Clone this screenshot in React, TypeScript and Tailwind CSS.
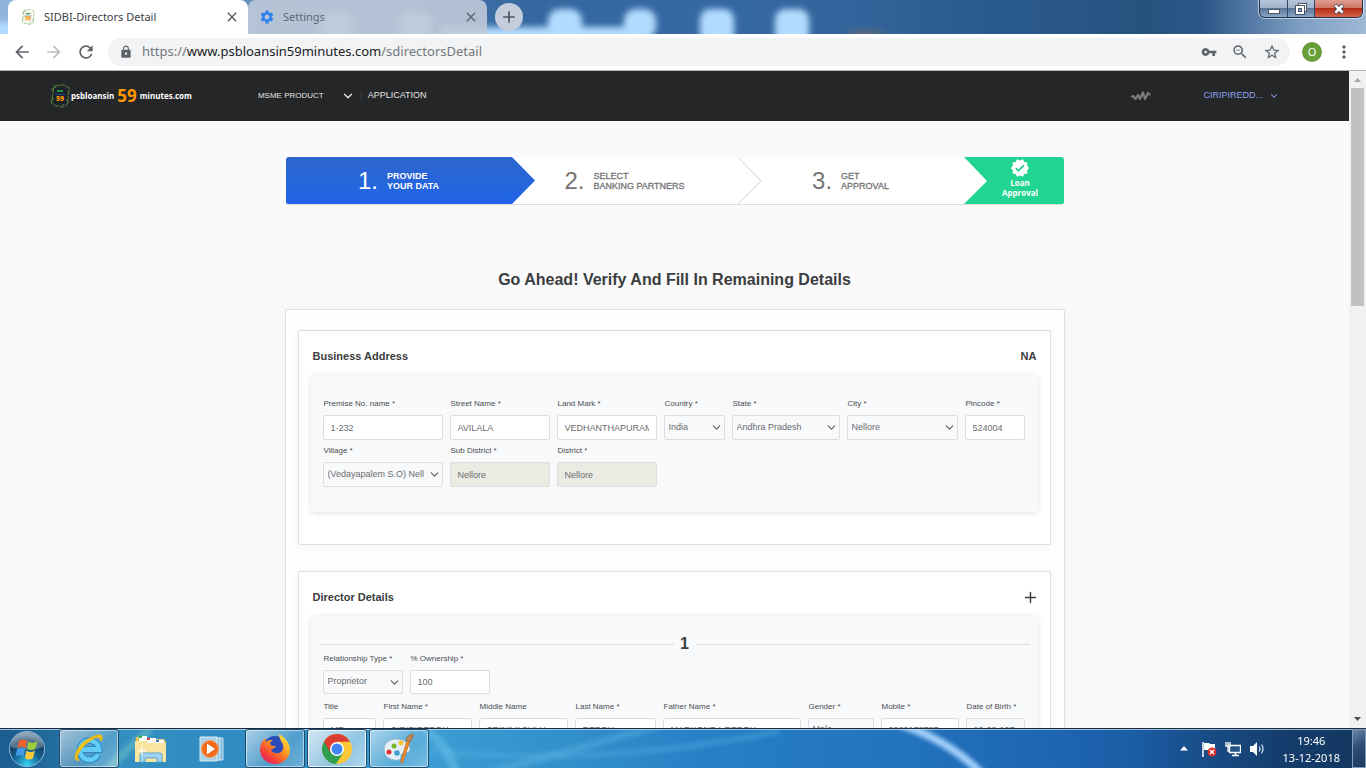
import React, { useId } from "react";
import { ChevronDown, Plus } from "lucide-react";
import {
  MdAdd,
  MdArrowBack,
  MdArrowForward,
  MdClose,
  MdLock,
  MdMoreVert,
  MdRefresh,
  MdSettings,
  MdStarBorder,
  MdVerified,
  MdVpnKey,
  MdZoomOut,
} from "react-icons/md";

function NotesMark({ className, dark }: { className: string; dark?: boolean }) {
  return (
    <svg viewBox="0 0 20 24" className={className} aria-hidden="true">
      <g fill="none" stroke="#5f9a48" strokeWidth="0.8">
        <path d="M4 2 L14 0.8 L19.2 4 L17.500 20 L13 23.200 L5 21.500 L1.500 19 Z" strokeDasharray="5 1" />
        <path d="M1 6 L6 3 M1 17 L4 14 M16 16 L19 18 M12 22 L15 19" />
      </g>
      <rect x="4" y="4" width="12" height="16" rx="1" fill={dark ? "#17202b" : "#f4efe4"} />
      <path d="M7 7h6" stroke="#19a64a" strokeWidth="1.8" />
      <path d="M5 10.5h10" stroke={dark ? "#29408a" : "#5b78c4"} strokeWidth="1" />
      <text x="10" y="17" textAnchor="middle" fontSize="7" fontWeight="800" fill="#ff9800" fontFamily="Open Sans, sans-serif">
        59
      </text>
    </svg>
  );
}

function TitleBar() {
  return (
    <div className="relative flex h-[34px] shrink-0 overflow-hidden bg-[linear-gradient(90deg,#8fb4dc_0%,#35689f_38%,#3569a3_50%,#33659c_62%,#2a5a8e_72%,#27527f_84%,#2c5687_88%,#7c9dc2_95%,#9fb9d6_100%)]">
      <svg className="absolute inset-0 h-full w-full" viewBox="0 0 1366 34" preserveAspectRatio="none" aria-hidden="true">
        <defs>
          <filter id="haze" x="-20%" y="-50%" width="140%" height="200%">
            <feGaussianBlur stdDeviation="3" />
          </filter>
        </defs>
        <g filter="url(#haze)" fill="#b3dbff">
          <rect x="-10" y="22" width="30" height="20" />
          <rect x="320" y="12" width="34" height="30" rx="12" />
          <rect x="398" y="12" width="34" height="30" rx="12" />
          <rect x="440" y="27" width="208" height="14" />
          <rect x="548" y="9" width="34" height="30" rx="12" />
          <rect x="624" y="9" width="32" height="30" rx="12" />
          <rect x="700" y="9" width="34" height="36" rx="10" />
          <rect x="775" y="9" width="34" height="36" rx="10" />
          <ellipse cx="866" cy="34" rx="18" ry="4" fill="#5f6b77" />
        </g>
      </svg>
      <div className="relative ml-2 flex w-[240px] items-center rounded-t-lg bg-white pl-3 pr-2">
        <NotesMark className="h-4 w-4" />
        <span className="ml-2 flex-1 whitespace-nowrap text-[11px] text-[#3c4043]">SIDBI-Directors Detail</span>
        <button aria-label="Close tab" className="text-[#54585d]">
          <MdClose className="h-4 w-4" />
        </button>
      </div>
      <div className="relative flex w-[239px] items-center rounded-t-lg bg-[#c0c9d8]/90 pl-[11px] pr-2">
        <MdSettings className="h-4 w-4 text-[#2f80ed]" />
        <span className="ml-2 flex-1 text-[11px] text-[#5f6771]">Settings</span>
        <button aria-label="Close tab" className="text-[#5c646e]">
          <MdClose className="h-4 w-4" />
        </button>
      </div>
      <button
        aria-label="New tab"
        className="relative ml-2 mt-[3px] flex h-7 w-7 items-center justify-center rounded-full bg-[#c3cddb] text-[#50565e]"
      >
        <MdAdd className="h-5 w-5" />
      </button>
      <div className="relative ml-auto mr-[3px] flex h-[18px] overflow-hidden rounded-b-md border border-t-0 border-[#20334e] shadow-[0_0_0_1px_rgba(255,255,255,0.55)]">
        <button
          aria-label="Minimise"
          className="flex w-7 items-center justify-center border-r border-[#2c4569] bg-[linear-gradient(#b5c6da_0%,#9db2cb_48%,#5b7899_50%,#8aa6c5_100%)]"
        >
          <svg viewBox="0 0 14 12" className="h-3 w-[14px]" aria-hidden="true">
            <rect x="1.5" y="6.5" width="11" height="4" fill="#fff" stroke="#4a5568" />
          </svg>
        </button>
        <button
          aria-label="Restore"
          className="flex w-[27px] items-center justify-center border-r border-[#2c4569] bg-[linear-gradient(#b5c6da_0%,#9db2cb_48%,#5b7899_50%,#8aa6c5_100%)]"
        >
          <svg viewBox="0 0 14 14" className="h-[14px] w-[14px]" aria-hidden="true">
            <rect x="4.5" y="1.5" width="8" height="8" fill="#fff" stroke="#4a5568" />
            <rect x="1.5" y="3.5" width="9" height="9" fill="#fff" stroke="#4a5568" />
            <rect x="4.5" y="6.5" width="3" height="3" fill="#8aa6c5" stroke="#4a5568" />
          </svg>
        </button>
        <button
          aria-label="Close window"
          className="flex w-[47px] items-center justify-center bg-[linear-gradient(#dd9f93_0%,#cf7464_46%,#b32d14_50%,#d8654a_100%)]"
        >
          <svg viewBox="0 0 14 12" className="h-3 w-[14px]" aria-hidden="true">
            <path d="M3 2 L11 10 M11 2 L3 10" stroke="#4a4a5a" strokeWidth="4.4" />
            <path d="M3.4 2.4 L10.6 9.6 M10.6 2.4 L3.4 9.6" stroke="#fff" strokeWidth="2.6" />
          </svg>
        </button>
      </div>
    </div>
  );
}

function AddressBar() {
  return (
    <div className="flex h-[37px] shrink-0 items-center border-b border-[#b4b4b4] bg-white pl-3 text-[#5f6368]">
      <button aria-label="Back" className="mr-3">
        <MdArrowBack className="h-5 w-5" />
      </button>
      <button aria-label="Forward" className="mr-3 text-[#bdbdbd]">
        <MdArrowForward className="h-5 w-5" />
      </button>
      <button aria-label="Reload" className="mr-3">
        <MdRefresh className="h-5 w-5" />
      </button>
      <div className="flex h-7 flex-1 items-center rounded-full bg-[#f1f3f4] pl-[11px] pr-[9px]">
        <MdLock className="h-[14px] w-[14px]" />
        <span className="ml-[9px] flex-1 whitespace-nowrap text-[13px] text-[#74787d]">
          https://<span className="text-[#202124]">www.psbloansin59minutes.com</span>/sdirectorsDetail
        </span>
        <div className="flex items-center gap-[14px]">
          <MdVpnKey className="h-4 w-4" />
          <MdZoomOut className="h-[18px] w-[18px]" />
          <MdStarBorder className="h-[18px] w-[18px]" />
        </div>
      </div>
      <span className="ml-3 flex h-5 w-5 items-center justify-center rounded-full bg-[#689f38] text-[11px] text-white">
        O
      </span>
      <button aria-label="Menu" className="ml-3 mr-3">
        <MdMoreVert className="h-5 w-5" />
      </button>
    </div>
  );
}

function SiteHeader() {
  return (
    <header className="flex h-[50px] items-center bg-[#252628] pl-[50px] pr-[70px] text-white">
      <a href="#home" className="flex items-center font-['Open_Sans',sans-serif] font-bold">
        <NotesMark className="h-6 w-5" dark />
        <span className="ml-px text-[8px]">psbloansin</span>
        <span className="mx-[3px] text-[17px] leading-5 text-[#ff9800]">59</span>
        <span className="text-[8px]">minutes.com</span>
      </a>
      <nav className="ml-[66px] flex items-center text-[#e4e4e4]">
        <a href="#msme" className="flex items-center text-[8px]">
          MSME PRODUCT
          <ChevronDown className="ml-[17px] h-[14px] w-[14px]" strokeWidth={2.5} />
        </a>
        <span className="mx-[6px] h-2 w-px bg-[#3d3e40]" />
        <a href="#application" className="text-[9px]">
          APPLICATION
        </a>
      </nav>
      <svg viewBox="0 0 20 10" className="ml-auto h-[10px] w-5" aria-hidden="true">
        <path
          d="M1 5.5 L2.5 5 L4.5 8 L7 4 L9 8 L12 1.5 L14 8 L17 2 L18.5 3.5"
          fill="none"
          stroke="#7b7c7e"
          strokeWidth="2.2"
          strokeLinecap="round"
          strokeLinejoin="round"
        />
      </svg>
      <button className="ml-[52px] flex items-center gap-[6px] text-[9px] text-[#8fa2ee]">
        CIRIPIREDD... <ChevronDown className="h-[10px] w-[10px]" strokeWidth={2.5} />
      </button>
    </header>
  );
}

function StepText({ n, top, bottom, active }: { n: string; top: string; bottom: string; active?: boolean }) {
  return (
    <div className={active ? "flex items-center gap-[9px] text-white" : "flex items-center gap-[9px] text-[#757575]"}>
      <span className="text-[24px] leading-7">{n}.</span>
      <span className={active ? "text-[9px] font-bold leading-[10px]" : "text-[9px] font-medium leading-[10px] [-webkit-text-stroke:0.3px_#757575]"}>
        {top}
        <br />
        {bottom}
      </span>
    </div>
  );
}

function Steps() {
  return (
    <ol className="mx-px flex h-[48px] overflow-hidden rounded-[3px] border-b border-[#dcdcdc] bg-white">
      <li className="flex flex-1 items-center justify-center bg-[linear-gradient(#2d66cd,#2064e8)]">
        <StepText n="1" top="PROVIDE" bottom="YOUR DATA" active />
      </li>
      <li className="relative flex flex-1 items-center justify-center">
        <svg className="absolute left-0 top-0 h-full w-6" viewBox="0 0 24 47" preserveAspectRatio="none" aria-hidden="true">
          <defs>
            <linearGradient id="stepBlue" x1="0" y1="0" x2="0" y2="1">
              <stop offset="0" stopColor="#2d66cd" />
              <stop offset="1" stopColor="#2064e8" />
            </linearGradient>
          </defs>
          <path d="M0 0 L23 23.5 L0 47 Z" fill="url(#stepBlue)" />
        </svg>
        <StepText n="2" top="SELECT" bottom="BANKING PARTNERS" />
      </li>
      <li className="relative flex flex-1 items-center justify-center">
        <svg className="absolute left-0 top-0 h-full w-6" viewBox="0 0 24 47" preserveAspectRatio="none" aria-hidden="true">
          <path d="M0 0 L23 24 L0 47" fill="none" stroke="#e0e0e0" strokeWidth="1.2" />
        </svg>
        <StepText n="3" top="GET" bottom="APPROVAL" />
      </li>
      <li className="relative flex w-[100px] flex-col items-center bg-[#21d491] pl-[13px] pt-px font-['Open_Sans',sans-serif] text-[8px] font-bold leading-[10px] text-white">
        <svg className="absolute left-0 top-0 h-full w-6" viewBox="0 0 24 47" preserveAspectRatio="none" aria-hidden="true">
          <path d="M-1 -1 L23 24 L-1 48 Z" fill="#fff" />
        </svg>
        <MdVerified className="h-5 w-5" />
        <span>Loan</span>
        <span>Approval</span>
      </li>
    </ol>
  );
}

const control =
  "w-full rounded-[2px] border border-[#dcdddf] text-[9px] text-[#6a6c70] outline-none";

type FieldProps = {
  label: string;
  value: string;
  width: string;
  kind?: "text" | "select";
  height?: string;
  tint?: string;
};

function Field({ label, value, width, kind = "text", height = "h-[25px]", tint = "bg-white" }: FieldProps) {
  const id = useId();
  return (
    <div className={`flex min-w-0 flex-col gap-[5px] ${width}`}>
      <label htmlFor={id} className="whitespace-nowrap pl-px text-[8px] leading-3 text-[#4b4d51]">
        {label}
      </label>
      {kind === "select" ? (
        <div className="relative">
          <select id={id} className={`${control} ${height} block appearance-none bg-[#f8f9fb] pl-1 pr-[18px]`} defaultValue={value}>
            <option>{value}</option>
          </select>
          <ChevronDown
            className="pointer-events-none absolute right-[2px] top-[6px] h-[13px] w-[13px] text-[#5c5e62]"
            strokeWidth={2}
          />
        </div>
      ) : (
        <input id={id} type="text" defaultValue={value} className={`${control} ${height} ${tint} px-[7px]`} />
      )}
    </div>
  );
}

function Card({ title, aside, children }: { title: string; aside: React.ReactNode; children: React.ReactNode }) {
  return (
    <section className="rounded-[2px] border border-[#dddee0] bg-white px-3 pb-8 shadow-[0_1px_10px_rgba(0,0,0,0.05)]">
      <div className="flex h-11 items-center justify-between pl-[2px] pt-[7px] text-[#3b3d40]">
        <h2 className="text-[11px] font-bold">{title}</h2>
        {aside}
      </div>
      <div className="rounded-[3px] bg-[#f8f9fb] px-3 pb-[25px] shadow-[0_1px_6px_rgba(0,0,0,0.12)]">{children}</div>
    </section>
  );
}

function ScrollBar() {
  return (
    <div className="flex w-[17px] shrink-0 flex-col items-center bg-[#f1f1f1]" aria-hidden="true">
      <svg viewBox="0 0 17 17" className="h-[17px] w-[17px]">
        <path d="M5 11h7L8.500 7z" fill="#a3a3a3" />
      </svg>
      <div className="h-[218px] w-[13px] bg-[#c1c1c1]" />
      <svg viewBox="0 0 17 17" className="mt-auto h-[17px] w-[17px]">
        <path d="M5 6h7L8.500 10z" fill="#505050" />
      </svg>
    </div>
  );
}

function TaskButton({ label, tone, children }: { label: string; tone: "idle" | "open" | "front"; children: React.ReactNode }) {
  const tones = {
    idle: "border-transparent",
    open: "border-[#1c4a6d] bg-[linear-gradient(135deg,rgba(255,255,255,0.6),rgba(255,255,255,0.15)_60%,rgba(255,255,255,0.3))] shadow-[inset_0_0_0_1px_rgba(255,255,255,0.5)]",
    front: "border-[#1c4a6d] bg-[linear-gradient(135deg,rgba(255,255,255,0.8),rgba(255,255,255,0.45)_60%,rgba(255,255,255,0.6))] shadow-[inset_0_0_0_1px_rgba(255,255,255,0.8)]",
  };
  return (
    <button aria-label={label} className={`flex w-[60px] items-center justify-center rounded-[3px] border ${tones[tone]}`}>
      {children}
    </button>
  );
}

function Taskbar() {
  return (
    <footer className="relative flex h-10 shrink-0 overflow-hidden border-t border-[#1b2c40] bg-[linear-gradient(90deg,#1c5c8e_0%,#226d9f_4%,#348fc0_7%,#2f8cc3_20%,#3c9fd4_30%,#318fcb_42%,#2780c6_52%,#2273bd_66%,#1e65b3_77%,#1b5da5_83%,#184d88_88%,#153d6c_94%,#12365f_100%)]">
      <svg className="absolute inset-0 h-full w-full" viewBox="0 0 1366 40" preserveAspectRatio="none" aria-hidden="true">
        <defs>
          <filter id="soft" x="-10%" y="-50%" width="120%" height="200%">
            <feGaussianBlur stdDeviation="2" />
          </filter>
        </defs>
        <g fill="none" filter="url(#soft)">
          <path d="M890 -8 Q945 8 982 46" stroke="#a3d0fa" strokeWidth="8" />
          <path d="M430 22 Q600 40 780 2" stroke="#5aaee0" strokeWidth="6" opacity="0.4" />
          <path d="M490 44 Q580 20 660 -4" stroke="#6abbe6" strokeWidth="8" opacity="0.35" />
          <path d="M425 0 Q450 20 455 44" stroke="#7ecbef" strokeWidth="10" opacity="0.4" />
          <path d="M105 44 Q130 18 150 0" stroke="#74c9c4" strokeWidth="8" opacity="0.5" />
        </g>
        <path d="M0 0.500H1366" stroke="#c5e2f5" opacity="0.75" />
      </svg>

      <button aria-label="Start" className="relative ml-2 mr-[13px] flex w-[38px] items-center">
        <svg viewBox="0 0 38 38" className="h-[38px] w-[38px]" aria-hidden="true">
          <defs>
            <radialGradient id="orb" cx="0.5" cy="0.95" r="0.85">
              <stop offset="0" stopColor="#35d6f5" />
              <stop offset="0.45" stopColor="#136695" />
              <stop offset="0.8" stopColor="#173b5c" />
              <stop offset="1" stopColor="#5d7f9c" />
            </radialGradient>
          </defs>
          <circle cx="19" cy="19" r="17.500" fill="url(#orb)" stroke="#8dbbd8" />
          <path d="M3 17a16 15 0 0 1 32 0Q19 22 3 17" fill="#fff" opacity="0.28" />
          <path d="M11 11q4-3 8 0l-1.500 7q-4-3-8 0z" fill="#f0602c" />
          <path d="M20.500 11.500q4 3 9-.5l-2 7.500q-4 3-8.500 0z" fill="#9ccb3b" />
          <path d="M9 19.500q4-3 8 0l-1.500 7q-4-3-8 0z" fill="#3f9be8" />
          <path d="M18.500 20.500q4 3 8.500 0l-2 7.500q-4 3-8 0z" fill="#fdc938" />
        </svg>
      </button>
      <div className="relative flex gap-[2px]">
        <TaskButton label="Internet Explorer" tone="open">
          <svg viewBox="0 0 34 34" className="h-[34px] w-[34px]" aria-hidden="true">
            <path d="M26 22.500A9.500 9.500 0 1 1 27 17.500H10" fill="none" stroke="#2180c4" strokeWidth="6.500" />
            <path d="M26 22.500A9.500 9.500 0 1 1 27 17.500H10" fill="none" stroke="#62ccf7" strokeWidth="4.800" />
            <path
              d="M7 28C2 27 7 17 16 10S29 4 29 9C33 1 25 2 15 8S-1 30 7 28"
              fill="#fcd21c"
              stroke="#e8b716"
              strokeWidth="1.400"
            />
          </svg>
        </TaskButton>
        <TaskButton label="File Explorer" tone="idle">
          <svg viewBox="0 0 34 32" className="h-8 w-[34px]" aria-hidden="true">
            <path d="M2 4h9l2 2h17l2 3v20H2z" fill="#e7c35d" />
            <path d="M5 3h8v5H5z" fill="#fff" />
            <path d="M5 3h3v2H5z" fill="#35a852" />
            <path d="M13 5h9v5h-9z" fill="#fff" />
            <path d="M13 5h3v2h-3z" fill="#e5432d" />
            <path d="M22 7h8v5h-8z" fill="#fff" />
            <path d="M22 7h3v2h-3z" fill="#2f7de1" />
            <path d="M1 8h11l2 2h18v19H1z" fill="#f8e6a0" />
            <path d="M6 29v-7q0-2 2-2h18q2 0 2 2v7h-5v-4H11v4z" fill="#9fd3f0" stroke="#5aa5cf" />
            <path d="M8 14v8M4 18h8" stroke="#fff" strokeWidth="1.200" />
          </svg>
        </TaskButton>
        <TaskButton label="Media Player" tone="idle">
          <svg viewBox="0 0 30 28" className="h-7 w-[30px]" aria-hidden="true">
            <path d="M8 3h17v22H8z" fill="#7db9dc" stroke="#c8e4f3" />
            <path d="M5 3h17v22H5z" fill="#8ec5e3" stroke="#d6ecf7" />
            <path d="M2 2h17v24H2z" fill="#a9d2e9" stroke="#d6ecf7" />
            <circle cx="12" cy="14" r="8.500" fill="#f26a1b" stroke="#f9a05d" />
            <path d="M9 8.500v11L17 14z" fill="#fff" />
          </svg>
        </TaskButton>
        <TaskButton label="Firefox" tone="open">
          <svg viewBox="0 0 32 32" className="h-8 w-8" aria-hidden="true">
            <defs>
              <linearGradient id="fox" x1="0.9" y1="0" x2="0.1" y2="1">
                <stop offset="0" stopColor="#fff04a" />
                <stop offset="0.4" stopColor="#ff9a1f" />
                <stop offset="0.75" stopColor="#f63b3b" />
                <stop offset="1" stopColor="#d81b74" />
              </linearGradient>
            </defs>
            <circle cx="16" cy="14.500" r="11.500" fill="#2a4bb8" />
            <path
              d="M20 1c5 3 11 8 11 16 0 8-7 14-15 14S1 25 1 17c0-5 2-9 5-12l1 4c2-2 4-2 7-2-2 1-3 3-3 4 1 2 4 2 6 2-1 2-4 3-5 4 2 4 10 5 12-1 2-5-4-8-4-15"
              fill="url(#fox)"
            />
          </svg>
        </TaskButton>
        <TaskButton label="Chrome" tone="front">
          <svg viewBox="0 0 32 32" className="h-8 w-8" aria-hidden="true">
            <circle cx="16" cy="16" r="15" fill="#fcc934" />
            <path d="M16 16L3 8.500A15 15 0 0 0 15 31L22.500 19.500Z" fill="#2f9e50" />
            <path d="M3 8.500A15 15 0 0 1 29 8.700H16L9.500 19.800Z" fill="#db3d31" />
            <circle cx="16" cy="16" r="7" fill="#fff" />
            <circle cx="16" cy="16" r="5.500" fill="#4284f4" />
          </svg>
        </TaskButton>
        <TaskButton label="Paint" tone="open">
          <svg viewBox="0 0 34 34" className="h-[34px] w-[34px]" aria-hidden="true">
            <path
              d="M14 7c8 0 14 4 14 10 0 3-2 4-5 4s-4 1-4 3c0 4-3 5-7 4C5 27 2 22 2 17 2 11 7 7 14 7"
              fill="#e3eef6"
              stroke="#91b4cb"
            />
            <circle cx="7" cy="20" r="2.500" fill="#e3342f" />
            <circle cx="12" cy="14" r="2.500" fill="#79b928" />
            <circle cx="19" cy="11" r="2.500" fill="#f4c430" />
            <circle cx="15" cy="21" r="2.800" fill="#3d9fce" />
            <path d="M28 9L21 30l-2 2 0-3L25 8z" fill="#ed8b2b" stroke="#b55f15" strokeWidth="0.600" />
            <path d="M24 8q1-6 8-6-2 6-4 8z" fill="#b88a5a" stroke="#8c6337" strokeWidth="0.600" />
          </svg>
        </TaskButton>
      </div>
      <div className="relative ml-auto flex items-center text-white">
        <svg viewBox="0 0 8 5" className="mr-[13px] h-[5px] w-2" aria-hidden="true">
          <path d="M0 4.500L4 0l4 4.500z" fill="#fff" />
        </svg>
        <svg viewBox="0 0 16 16" className="mr-2 h-4 w-4" aria-hidden="true">
          <path d="M2 1v15" stroke="#fff" strokeWidth="1.500" />
          <path d="M3 2h5l1 1h5v7H9L8 9H3z" fill="#fff" />
          <circle cx="11" cy="11" r="4.500" fill="#d8322a" />
          <path d="M9 9l4 4M13 9l-4 4" stroke="#fff" strokeWidth="1.400" />
        </svg>
        <svg viewBox="0 0 16 16" className="mr-2 h-4 w-4" aria-hidden="true">
          <path d="M4.500 4.500h11v7h-11z" fill="#245687" stroke="#fff" strokeWidth="1.300" />
          <path d="M10.500 12v2M7 14.500h7" stroke="#fff" strokeWidth="1.500" />
          <path d="M1 1v4h4V1M3 1v3M3 5v5h2" fill="none" stroke="#fff" strokeWidth="1.300" />
        </svg>
        <svg viewBox="0 0 16 16" className="h-4 w-4" aria-hidden="true">
          <path d="M1 5h3l4-4v14l-4-4H1z" fill="#fff" />
          <path d="M10 5.500q2 2.500 0 5M12.500 3.500q3 4.500 0 9" fill="none" stroke="#dce9f5" strokeWidth="1.200" />
        </svg>
        <div className="ml-[18px] text-center text-[11px] leading-[17px]">
          19:46
          <br />
          13-12-2018
        </div>
        <button
          aria-label="Show desktop"
          className="ml-3 h-full w-[14px] border border-[#7f9cba] bg-[linear-gradient(150deg,#6a86a5,#2b4d73_45%,#1a3a5f)]"
        />
      </div>
    </footer>
  );
}

export default function App() {
  return (
    <div className="flex h-screen flex-col overflow-hidden bg-[#fafafa] font-['Noto_Sans',sans-serif]">
      <TitleBar />
      <AddressBar />
      <div className="flex min-h-0 flex-1">
        <div className="min-w-0 flex-1 overflow-hidden font-['Liberation_Sans',Arial,sans-serif]">
          <SiteHeader />
          <main className="mx-auto max-w-[780px] pt-9">
            <Steps />
            <h1 className="mb-[17px] mt-[63px] text-center text-[16px] font-bold leading-6 text-[#3b3d40]">
              Go Ahead! Verify And Fill In Remaining Details
            </h1>
            <div className="flex flex-col gap-[26px] rounded-[2px] border border-[#dddee0] bg-[#fefefe] pb-6 pl-3 pr-[13px] pt-5 shadow-[0_1px_12px_rgba(0,0,0,0.04)]">
              <Card title="Business Address" aside={<span className="pr-px text-[11px] font-bold">NA</span>}>
                <div className="flex gap-[7px] pt-[23px]">
                  <Field label="Premise No. name *" value="1-232" width="w-[120px]" />
                  <Field label="Street Name *" value="AVILALA" width="w-[100px]" />
                  <Field label="Land Mark *" value="VEDHANTHAPURAM" width="w-[100px]" />
                  <Field label="Country *" value="India" width="w-[61px]" kind="select" />
                  <Field label="State *" value="Andhra Pradesh" width="w-[108px]" kind="select" />
                  <Field label="City *" value="Nellore" width="w-[111px]" kind="select" />
                  <Field label="Pincode *" value="524004" width="w-[60px]" />
                </div>
                <div className="flex gap-[7px] pt-[5px]">
                  <Field label="Village *" value="(Vedayapalem S.O) Nellore" width="w-[120px]" kind="select" />
                  <Field label="Sub District *" value="Nellore" width="w-[100px]" tint="bg-[#ebebe4]" />
                  <Field label="District *" value="Nellore" width="w-[100px]" tint="bg-[#ebebe4]" />
                </div>
              </Card>
              <Card
                title="Director Details"
                aside={
                  <button aria-label="Add director" className="-mr-px">
                    <Plus className="h-[17px] w-[17px]" strokeWidth={2} />
                  </button>
                }
              >
                <div className="-mx-1 flex items-center gap-[6px] pt-[19px]">
                  <span className="h-px flex-[16] bg-[#dcdddf]" />
                  <span className="w-[10px] flex-none text-[16px] font-bold leading-[18px] text-[#3b3d40]">1</span>
                  <span className="h-px flex-[15] bg-[#dcdddf]" />
                </div>
                <div className="flex gap-[7px]">
                  <Field label="Relationship Type *" value="Proprietor" width="w-[80px]" kind="select" height="h-6" />
                  <Field label="% Ownership *" value="100" width="w-[80px]" height="h-6" />
                </div>
                <div className="flex gap-[7px] pt-[7px]">
                  <Field label="Title" value="MR" width="w-[53px]" height="h-6" />
                  <Field label="First Name *" value="CIRIPIREDDY" width="w-[89px]" height="h-6" />
                  <Field label="Middle Name" value="SRINIVASULU" width="w-[89px]" height="h-6" />
                  <Field label="Last Name *" value="REDDY" width="w-[81px]" height="h-6" />
                  <Field label="Father Name *" value="MARKONDA REDDY" width="w-[138px]" height="h-6" />
                  <Field label="Gender *" value="Male" width="w-[66px]" height="h-6" kind="select" />
                  <Field label="Mobile *" value="9989178787" width="w-[78px]" height="h-6" />
                  <Field label="Date of Birth *" value="12-08-1974" width="w-[59px]" height="h-6" tint="bg-[#f8f9fb]" />
                </div>
              </Card>
            </div>
          </main>
        </div>
        <ScrollBar />
      </div>
      <Taskbar />
    </div>
  );
}
